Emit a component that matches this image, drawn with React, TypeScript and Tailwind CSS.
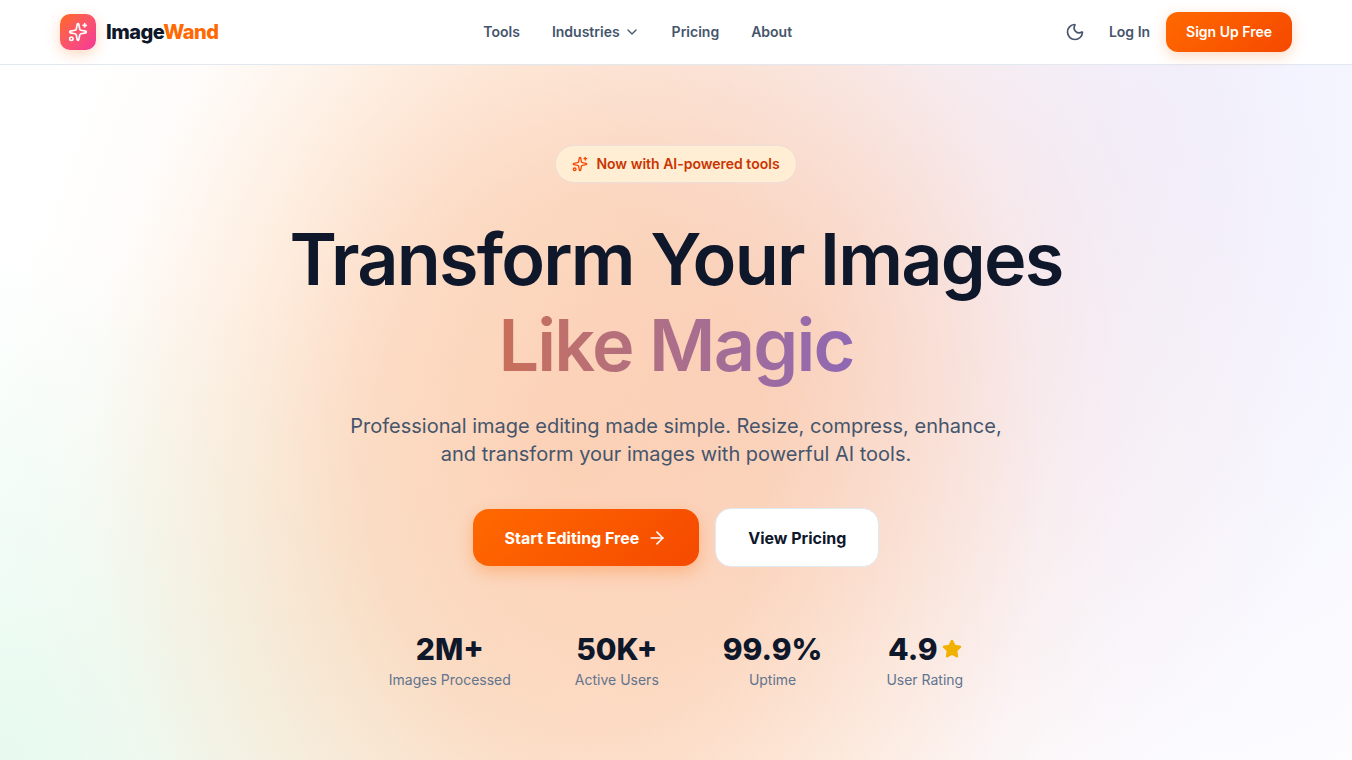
import React from 'react';
import { ArrowRight, ChevronDown, Moon, Sparkles, Star } from 'lucide-react';

const stats = [
  { value: '2M+', label: 'Images Processed' },
  { value: '50K+', label: 'Active Users' },
  { value: '99.9%', label: 'Uptime' },
  { value: '4.9', label: 'User Rating', star: true },
];

const Header: React.FC = () => (
  <header className="relative z-10 border-b border-slate-200 bg-white">
    <div className="mx-auto flex h-16 max-w-7xl items-center justify-between px-6">
      <a href="#" className="flex items-center gap-2.5">
        <span className="flex size-9 items-center justify-center rounded-[10px] bg-linear-to-br from-[#ff6900] to-[#f6339a] text-white shadow-[0_4px_14px_rgba(255,105,0,0.25)]">
          <Sparkles size={20} />
        </span>
        <span className="text-xl font-extrabold tracking-tight text-slate-900">
          Image<span className="text-[#ff6900]">Wand</span>
        </span>
      </a>

      <nav className="flex items-center gap-8 text-sm font-semibold text-slate-600">
        <a href="#tools">Tools</a>
        <button type="button" className="flex items-center gap-1">
          Industries <ChevronDown size={16} />
        </button>
        <a href="#pricing">Pricing</a>
        <a href="#about">About</a>
      </nav>

      <div className="flex items-center gap-4 text-sm font-semibold text-slate-600">
        <button type="button" aria-label="Toggle theme" className="flex size-9 items-center justify-center">
          <Moon size={20} />
        </button>
        <a href="#login">Log In</a>
        <button
          type="button"
          className="h-10 rounded-xl bg-linear-[135deg] from-[#ff6900] to-[#f54900] px-5 text-white shadow-[0_4px_14px_rgba(255,105,0,0.25)]"
        >
          Sign Up Free
        </button>
      </div>
    </div>
  </header>
);

const Hero: React.FC = () => (
  <section className="flex flex-1 flex-col items-center bg-white bg-[radial-gradient(ellipse_42%_110%_at_42%_58%,rgba(250,182,135,0.56)_0%,rgba(250,187,140,0.49)_35%,rgba(251,200,155,0.28)_62%,rgba(253,225,205,0.09)_84%,transparent_100%),radial-gradient(ellipse_40%_90%_at_60%_38%,rgba(250,200,190,0.5),rgba(250,215,212,0.25)_55%,transparent),radial-gradient(ellipse_46%_120%_at_86%_8%,rgba(236,237,255,0.8),rgba(243,243,255,0.65)_50%,transparent),radial-gradient(ellipse_42%_75%_at_0%_100%,rgba(218,247,230,0.65),transparent)] px-6 pt-20 pb-16 text-center">
    <div className="flex items-center gap-2 rounded-full border border-[#ebdedb] bg-[#ffedd4] px-4 py-2 text-sm font-semibold text-[#ca3500]">
      <Sparkles size={16} className="text-[#f54900]" />
      Now with AI-powered tools
    </div>

    <h1 className="mt-[33px] text-[72px] leading-[86px] font-semibold tracking-tight text-slate-900">
      Transform Your Images
      <br />
      <span className="inline-block bg-linear-to-r from-[#c96f58] to-[#8f68b4] bg-clip-text text-transparent">
        Like Magic
      </span>
    </h1>

    <p className="mt-6 max-w-2xl text-xl leading-7 text-slate-600">
      Professional image editing made simple. Resize, compress, enhance, and transform your images with powerful AI tools.
    </p>

    <div className="mt-10 flex items-center gap-4 font-bold">
      <button
        type="button"
        className="flex h-[57px] items-center gap-2 rounded-2xl bg-linear-[135deg] from-[#ff6900] to-[#f54900] px-8 text-white shadow-[0_6px_16px_rgba(255,105,0,0.3)]"
      >
        Start Editing Free <ArrowRight size={20} />
      </button>
      <button type="button" className="h-[59px] rounded-2xl border border-slate-200 bg-white px-8 text-slate-900">
        View Pricing
      </button>
    </div>

    <dl className="mt-16 flex gap-16">
      {stats.map(s => (
        <div key={s.label} className="flex flex-col-reverse items-center gap-[3px]">
          <dt className="text-sm text-slate-500">{s.label}</dt>
          <dd className="flex items-center gap-1 text-3xl leading-9 font-extrabold text-slate-900">
            {s.value}
            {s.star && <Star size={20} className="fill-[#f0b100] text-[#f0b100]" />}
          </dd>
        </div>
      ))}
    </dl>
  </section>
);

export default function App() {
  return (
    <div className="flex min-h-screen flex-col bg-white font-['Inter',sans-serif]">
      <Header />
      <Hero />
    </div>
  );
}
